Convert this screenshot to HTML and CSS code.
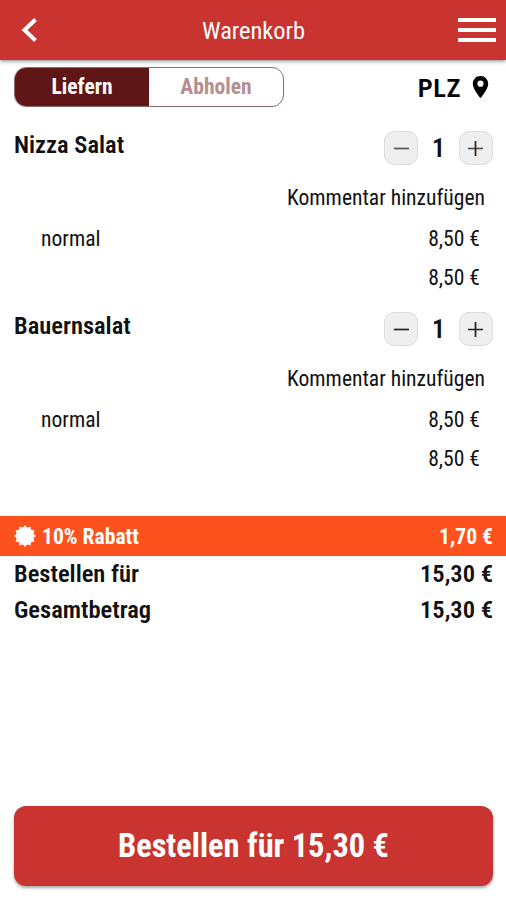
FILE: index.html
```html
<!DOCTYPE html>
<html lang="de">
  <head>
    <meta charset="utf-8">
    <title>Warenkorb</title>
    <link rel="stylesheet" href="styles.css">
  </head>
  <body>
    <header class="topbar">
      <svg class="back" viewBox="0 0 18 26"><path d="M15.500 2.500L4.500 13l11 10.500"/></svg>
      <h1 class="title">Warenkorb</h1>
      <div class="menu"><i></i><i></i><i></i></div>
    </header>
    <div class="delivery">
      <div class="switch">
        <span class="option on">Liefern</span>
        <span class="option">Abholen</span>
      </div>
      <div class="plz">
        <span>PLZ</span>
        <svg class="pin" viewBox="5 2 14 20"><path d="M12 2C8.130 2 5 5.130 5 9c0 5.250 7 13 7 13s7-7.750 7-13c0-3.870-3.130-7-7-7zm0 9.800a2.800 2.800 0 1 1 0-5.600 2.800 2.800 0 0 1 0 5.600z"/></svg>
      </div>
    </div>
    <main class="cart">
      <section class="item">
        <div class="head">
          <h2 class="name">Nizza Salat</h2>
          <div class="counter">
            <span class="step soft"><svg viewBox="0 0 14 14"><path d="M0 7h14"/></svg></span>
            <span class="count">1</span>
            <span class="step soft"><svg viewBox="0 0 14 14"><path d="M0 7h14"/><path class="dark" d="M7 0v14"/></svg></span>
          </div>
        </div>
        <div class="comment">Kommentar hinzufügen</div>
        <div class="row"><span>normal</span><span>8,50 €</span></div>
        <div class="row"><span></span><span>8,50 €</span></div>
      </section>
      <section class="item">
        <div class="head">
          <h2 class="name">Bauernsalat</h2>
          <div class="counter">
            <span class="step"><svg viewBox="0 0 14 14"><path d="M0 7h14"/></svg></span>
            <span class="count">1</span>
            <span class="step"><svg viewBox="0 0 14 14"><path d="M0 7h14M7 0v14"/></svg></span>
          </div>
        </div>
        <div class="comment">Kommentar hinzufügen</div>
        <div class="row"><span>normal</span><span>8,50 €</span></div>
        <div class="row"><span></span><span>8,50 €</span></div>
      </section>
    </main>
    <div class="discount">
      <svg class="badge" viewBox="-11 -11 22 22"><path d="M0-11l2.200 2.800 3.300-1.300.5 3.500 3.500.5-1.300 3.300L11 0 8.200 2.200l1.300 3.300-3.500.5-.5 3.500-3.300-1.300L0 11l-2.200-2.800-3.300 1.300-.5-3.500-3.500-.5 1.300-3.300L-11 0l2.800-2.200-1.300-3.300 3.500-.5.5-3.500 3.300 1.300z"/><circle r="8.800"/></svg>
      <span class="label">10% Rabatt</span>
      <span class="value">1,70 €</span>
    </div>
    <div class="sum"><span>Bestellen für</span><span>15,30 €</span></div>
    <div class="sum"><span>Gesamtbetrag</span><span>15,30 €</span></div>
    <button class="order">Bestellen für 15,30 €</button>
  </body>
</html>
```

FILE: styles.css
```css
*{
  margin: 0;
  padding: 0;
  box-sizing: border-box;
}
body{
  display: flex;
  flex-direction: column;
  height: 900px;
  overflow: hidden;
  background: #fff;
  color: #111;
  font-family: "Roboto Condensed", Roboto, sans-serif;
  font-stretch: 75%;
  font-size: 21.6px;
}
.topbar{
  display: flex;
  align-items: center;
  justify-content: space-between;
  height: 60px;
  padding: 0 10px 0 20px;
  background: #c93430;
  color: #fff;
  box-shadow: 0 1px 4px rgba(0,0,0,0.5);
}
.back{
  width: 18px;
  height: 26px;
  fill: none;
  stroke: #fff;
  stroke-width: 4;
}
.title{
  margin-left: 11px;
  font-size: 24.4px;
  font-weight: 450;
}
.menu{
  display: flex;
  flex-direction: column;
  gap: 6px;
  width: 38px;
}
.menu i{
  height: 4px;
  background: #fff;
}
.delivery{
  display: flex;
  align-items: center;
  justify-content: space-between;
  height: 40px;
  margin: 7px 17px 0 14px;
}
.switch{
  display: flex;
  width: 270px;
  height: 40px;
  border: 1px solid #8c6a6c;
  border-radius: 12px;
  overflow: hidden;
}
.option{
  flex: 1;
  line-height: 37px;
  text-align: center;
  font-weight: 700;
  color: #b68e90;
}
.option.on{
  background: #5f1616;
  color: #fff;
}
.plz{
  display: flex;
  align-items: center;
  gap: 11px;
  color: #000;
  font-size: 26.5px;
  font-weight: 600;
  letter-spacing: 0.5px;
}
.pin{
  width: 17px;
  height: 22px;
}
.item{
  height: 181px;
  padding: 24px 13px 0 14px;
}
.head{
  display: flex;
  justify-content: space-between;
  height: 34px;
}
.name{
  font-size: 24.5px;
  font-weight: 600;
  line-height: 28px;
}
.counter{
  display: flex;
  align-items: center;
  justify-content: space-between;
  width: 109px;
}
.step{
  display: flex;
  align-items: center;
  justify-content: center;
  width: 34px;
  height: 34px;
  border: 1px solid #dcdcdc;
  border-radius: 10px;
  background: #efefef;
}
.step svg{
  width: 15px;
  height: 15px;
  stroke: #222;
  stroke-width: 1.6;
}
.soft svg{
  stroke: #555;
}
.soft .dark{
  stroke: #3a1c16;
}
.count{
  font-size: 26px;
  font-weight: 600;
}
.comment{
  margin: 13px 8px 1px 0;
  line-height: 40px;
  text-align: right;
}
.row{
  display: flex;
  justify-content: space-between;
  padding: 0 13px 0 27px;
  line-height: 39px;
}
.discount{
  display: flex;
  align-items: center;
  height: 40px;
  margin-top: 47px;
  padding: 0 13px 0 14px;
  background: #fd521e;
  color: #fff;
  font-weight: 700;
}
.badge{
  width: 22px;
  height: 22px;
  fill: #fff;
}
.label{
  margin-left: 6px;
}
.value{
  margin-left: auto;
}
.sum{
  display: flex;
  justify-content: space-between;
  padding: 0 13px 0 14px;
  font-size: 24.5px;
  font-weight: 600;
  line-height: 36px;
}
.order{
  height: 80px;
  margin: auto 13px 14px 14px;
  border: 0;
  border-radius: 12px;
  background: #c93430;
  color: #fff;
  font: inherit;
  font-size: 32.400px;
  font-weight: 700;
  box-shadow: 0 2px 3px rgba(0,0,0,0.35);
}
```
